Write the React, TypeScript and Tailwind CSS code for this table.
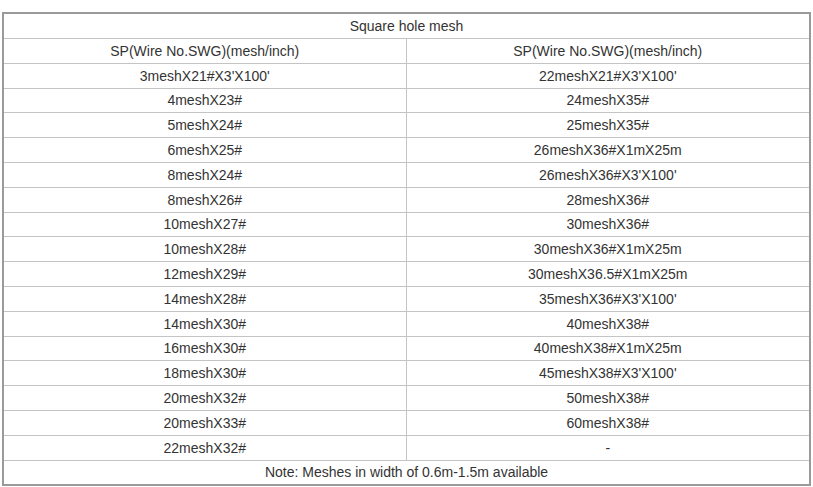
import React from "react";

const rows: [string, string][] = [
  ["3meshX21#X3'X100'", "22meshX21#X3'X100'"],
  ["4meshX23#", "24meshX35#"],
  ["5meshX24#", "25meshX35#"],
  ["6meshX25#", "26meshX36#X1mX25m"],
  ["8meshX24#", "26meshX36#X3'X100'"],
  ["8meshX26#", "28meshX36#"],
  ["10meshX27#", "30meshX36#"],
  ["10meshX28#", "30meshX36#X1mX25m"],
  ["12meshX29#", "30meshX36.5#X1mX25m"],
  ["14meshX28#", "35meshX36#X3'X100'"],
  ["14meshX30#", "40meshX38#"],
  ["16meshX30#", "40meshX38#X1mX25m"],
  ["18meshX30#", "45meshX38#X3'X100'"],
  ["20meshX32#", "50meshX38#"],
  ["20meshX33#", "60meshX38#"],
  ["22meshX32#", "-"],
];

export default function App() {
  const cell = "border border-[#c4c4c4] text-center align-middle p-0";
  return (
    <div
      className="w-[813px] h-[487px] bg-white pt-[12px] pl-[2px]"
      style={{ fontFamily: '"Liberation Sans", Arial, sans-serif' }}
    >
      <table className="w-[809px] h-[474px] border-collapse border-2 border-[#9a9a9a] text-[14px] leading-none text-[#333]">
        <tbody>
          <tr className="h-[25.5px]">
            <td colSpan={2} className={cell}>
              Square hole mesh
            </td>
          </tr>
          <tr className="h-[24.8px]">
            <td className={cell + " w-[403px]"}>SP(Wire No.SWG)(mesh/inch)</td>
            <td className={cell}>SP(Wire No.SWG)(mesh/inch)</td>
          </tr>
          {rows.map(([a, b], i) => (
            <tr key={i} className="h-[24.8px]">
              <td className={cell}>{a}</td>
              <td className={cell}>{b}</td>
            </tr>
          ))}
          <tr>
            <td colSpan={2} className={cell}>
              Note: Meshes in width of 0.6m-1.5m available
            </td>
          </tr>
        </tbody>
      </table>
    </div>
  );
}
